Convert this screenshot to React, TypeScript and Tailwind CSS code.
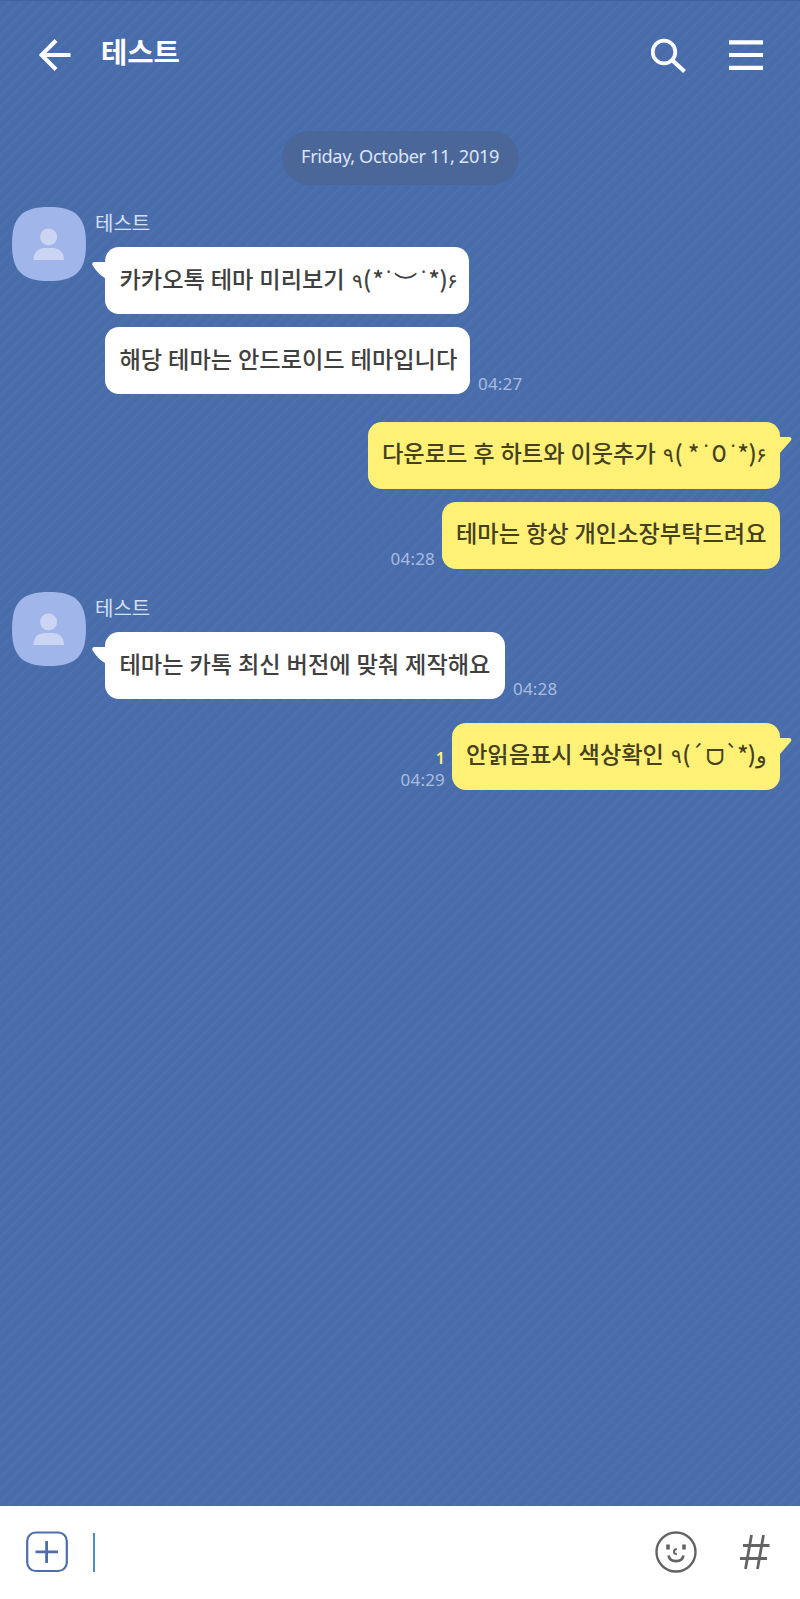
import type { ReactNode } from "react";

type Glyph = { ch: string; cls: string };

function Kaomoji({ glyphs }: { glyphs: Glyph[] }) {
  return (
    <span dir="ltr" className="ml-[2px] flex h-[34px] items-baseline font-normal whitespace-pre">
      {glyphs.map((g, i) => (
        <span key={i} className={`inline-flex justify-center leading-[34px] ${g.cls}`}>
          {g.ch}
        </span>
      ))}
    </span>
  );
}

function Avatar() {
  return (
    <svg className="mt-[0.700px] block h-[74px] w-[74px] shrink-0" viewBox="0 0 74 74">
      <path d="M37 0C64 0 74 10 74 37S64 74 37 74 0 64 0 37 10 0 37 0Z" fill="#a0b5e9" />
      <circle cx="36.6" cy="30" r="8.5" fill="#c9d5f3" />
      <path d="M21.500 53C21.500 44.500 27 41 33 41H40C46.500 41 52 44.500 52 53Z" fill="#c9d5f3" />
    </svg>
  );
}

function Tail({ side }: { side: "left" | "right" }) {
  return side === "left" ? (
    <svg className="absolute top-[15px] -left-[13px] h-[18px] w-[15px]" viewBox="0 0 15 18">
      <path d="M15 0H2Q-1 1 1 4Q6 12 13 16H15Z" fill="#fff" />
    </svg>
  ) : (
    <svg className="absolute top-[15px] -right-[13px] h-[18px] w-[15px]" viewBox="0 0 15 18">
      <path d="M0 0H12Q14.500 1 12.500 4L2 16H0Z" fill="#fff176" />
    </svg>
  );
}

function Bubble({ mine, tail, width, children }: { mine?: boolean; tail?: boolean; width: string; children: ReactNode }) {
  return (
    <div
      className={`relative flex h-[67px] shrink-0 items-start whitespace-pre rounded-[14px] text-[23.2px] leading-[34px] font-medium [word-spacing:0.7px] ${width} ${
        mine ? "bg-[#fff176] pt-[13px] pl-[14px] text-[#45401f]" : "bg-white pt-[14px] pl-[14.500px] text-[#404040]"
      }`}
    >
      {tail && <Tail side={mine ? "right" : "left"} />}
      {children}
    </div>
  );
}

function Time({ children }: { children: string }) {
  return (
    <span className="font-['Noto_Sans',sans-serif] text-[17px] leading-[21px] tracking-[0.2px] text-[#a9bce0]">
      {children}
    </span>
  );
}

function Sender({ children }: { children: ReactNode }) {
  return (
    <div className="flex pl-[11.500px]">
      <Avatar />
      <div className="ml-[9.500px] flex flex-col">
        <span className="h-[41px] pt-[3px] text-[20px] leading-[28px] text-[#d5e0f6]">테스트</span>
        <div className="flex flex-col gap-[13px] pl-[10px]">{children}</div>
      </div>
    </div>
  );
}

const smile: Glyph[] = [
  { ch: "٩", cls: "w-[10px] text-[20px]" },
  { ch: "(", cls: "w-[9px] font-medium" },
  { ch: "*", cls: "w-[13px] font-medium" },
  { ch: "˙", cls: "w-[8px] font-['Noto_Sans',sans-serif]" },
  { ch: "︶", cls: "w-[26px] relative top-[4px]" },
  { ch: "˙", cls: "w-[10px] font-['Noto_Sans',sans-serif]" },
  { ch: "*", cls: "w-[11px] font-medium" },
  { ch: ")", cls: "w-[8px] font-medium" },
  { ch: "۶", cls: "w-[10px] text-[20px]" },
];

const open: Glyph[] = [
  { ch: "٩", cls: "w-[10px] text-[20px]" },
  { ch: "(", cls: "w-[10px] font-medium" },
  { ch: "*", cls: "w-[20px] font-medium" },
  { ch: "˙", cls: "w-[5px] font-['Noto_Sans',sans-serif]" },
  { ch: "O", cls: "w-[20px] text-[23px] font-medium scale-x-[0.85]" },
  { ch: "˙", cls: "w-[9px] font-['Noto_Sans',sans-serif]" },
  { ch: "*", cls: "w-[11px] font-medium" },
  { ch: ")", cls: "w-[8px] font-medium" },
  { ch: "۶", cls: "w-[10px] text-[20px]" },
];

const cheer: Glyph[] = [
  { ch: "٩", cls: "w-[10px] text-[20px]" },
  { ch: "(", cls: "w-[9px] font-medium" },
  { ch: "´", cls: "w-[13px]" },
  { ch: "ᗜ", cls: "w-[22px] text-[22px] relative top-[2px]" },
  { ch: "`", cls: "w-[12px]" },
  { ch: "*", cls: "w-[10px] font-medium" },
  { ch: ")", cls: "w-[8px] font-medium" },
  { ch: "و", cls: "w-[11px] text-[22px]" },
];

export default function App() {
  return (
    <div className="flex h-[1599px] w-[800px] flex-col overflow-hidden border-t border-[#3f61a0] bg-[#496dab] bg-[repeating-linear-gradient(135deg,#4a6eac_0px,#486baa_5px,#4d71ae_7px,#4a6eac_8.5px)] font-['Noto_Sans_CJK_KR',sans-serif]">
      <header className="flex h-[129px] shrink-0 items-start pt-[37px] pr-[37px] pl-[38.500px]">
        <svg className="mt-[1px] h-[32px] w-[32px]" viewBox="0 0 32 32" fill="none" stroke="#fff" strokeWidth="4">
          <path d="M31.500 16H3M17 1.500L2.500 16L17 30.500" />
        </svg>
        <h1 className="-mt-[7px] ml-[30.500px] text-[28.600px] leading-[40px] font-bold text-white">테스트</h1>
        <div className="ml-auto flex items-start">
          <svg className="h-[36px] w-[36px]" viewBox="0 0 36 36" fill="none" stroke="#fff">
            <circle cx="13" cy="14" r="11.300" strokeWidth="3.800" />
            <path d="M21 22L33.500 33.500" strokeWidth="4.200" />
          </svg>
          <svg className="ml-[42px] h-[34px] w-[34px]" viewBox="0 0 34 34" fill="#fff">
            <path d="M0 2.300H34V6.500H0ZM0 14.900H34V19.100H0ZM0 27.700H34V31.900H0Z" />
          </svg>
        </div>
      </header>

      <main className="flex flex-1 flex-col">
        <div className="mt-[0.500px] flex h-[54px] w-[237px] justify-center self-center rounded-full bg-[#4b6799] pt-[11px] font-['Noto_Sans',sans-serif] text-[18.200px] leading-[28px] tracking-[-0.400px] whitespace-nowrap text-[#dbe5f8]">
          Friday, October 11, 2019
        </div>

        <section className="mt-[21.500px]">
          <Sender>
            <Bubble tail width="w-[364px]">
              카카오톡 테마 미리보기 <Kaomoji glyphs={smile} />
            </Bubble>
            <div className="flex items-end gap-[8px]">
              <Bubble width="w-[365px]">해당 테마는 안드로이드 테마입니다</Bubble>
              <Time>04:27</Time>
            </div>
          </Sender>
        </section>

        <section className="mt-[28px] flex flex-col items-end gap-[12.500px] pr-5">
          <Bubble mine tail width="w-[412px]">
            다운로드 후 하트와 이웃추가 <Kaomoji glyphs={open} />
          </Bubble>
          <div className="flex items-end gap-[7px]">
            <Time>04:28</Time>
            <Bubble mine width="w-[338px]">테마는 항상 개인소장부탁드려요</Bubble>
          </div>
        </section>

        <section className="mt-[22.500px]">
          <Sender>
            <div className="flex items-end gap-[8px]">
              <Bubble tail width="w-[400px]">테마는 카톡 최신 버전에 맞춰 제작해요</Bubble>
              <Time>04:28</Time>
            </div>
          </Sender>
        </section>

        <section className="mt-[24px] flex items-end justify-end gap-[7px] pr-5">
          <div className="flex flex-col items-end">
            <span className="font-['Noto_Sans',sans-serif] text-[16px] leading-[22px] font-semibold text-[#fff176]">1</span>
            <Time>04:29</Time>
          </div>
          <Bubble mine tail width="w-[328px]">
            안읽음표시 색상확인 <Kaomoji glyphs={cheer} />
          </Bubble>
        </section>
      </main>

      <footer className="flex h-[93px] shrink-0 items-center bg-white pr-[30px] pb-px pl-[25.500px]">
        <svg className="h-[42px] w-[42px]" viewBox="0 0 42 42" fill="none" stroke="#4c6eaa" strokeWidth="2.200">
          <rect x="1.200" y="1.500" width="39.600" height="38.500" rx="8.500" />
          <path d="M20.600 10V32M9.500 20.800H32" strokeWidth="2.800" />
        </svg>
        <div className="ml-[25px] h-[39px] w-[2.500px] bg-[#4a8dc0]" />
        <svg className="ml-auto h-[42px] w-[42px]" viewBox="0 0 42 42" fill="none" stroke="#636363">
          <circle cx="21" cy="21" r="19.500" strokeWidth="2.400" />
          <path d="M13 13.500V18.500M29 13.500V18.500" strokeWidth="3.600" />
          <path d="M21.800 18Q19 18.500 19 20.800Q19 23 21.800 23.200" strokeWidth="2" />
          <path d="M13.500 24.500C15 32 27 32 28.500 24.500" strokeWidth="2.600" />
        </svg>
        <svg className="ml-[43px] h-[34px] w-[30px]" viewBox="0 0 30 34" fill="none" stroke="#636363" strokeWidth="2.800">
          <path d="M11.500 0L5.500 34M23.500 0L17.500 34M3 10.500H29.500M0 23.500H27" />
        </svg>
      </footer>
    </div>
  );
}
